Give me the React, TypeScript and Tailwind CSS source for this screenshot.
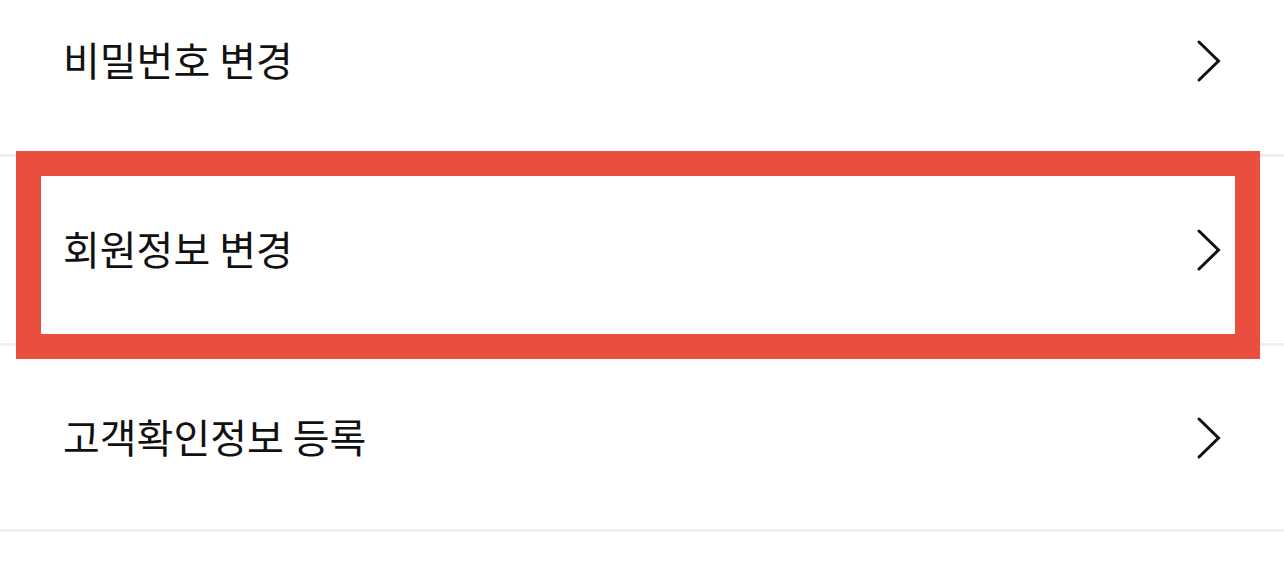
import { ReactNode } from "react";

const rows = [
  { label: "비밀번호 변경", height: "h-[186px]" },
  { label: "회원정보 변경", height: "h-[186px]", highlighted: true },
  { label: "고객확인정보 등록", height: "h-[183px]" },
];

export default function App() {
  return (
    <div className="h-[570px] w-[1284px] overflow-hidden bg-white">
      <ul className="-mt-[32px]">
        {rows.map((row) => (
          <MenuRow key={row.label} height={row.height} highlighted={row.highlighted}>
            {row.label}
          </MenuRow>
        ))}
      </ul>
    </div>
  );
}

function MenuRow({
  children,
  height,
  highlighted,
}: {
  children: ReactNode;
  height: string;
  highlighted?: boolean;
}) {
  return (
    <li className="relative border-b-[3px] border-[#efefef]">
      <div className={`flex ${height} items-center justify-between pl-[63px] pr-[62px]`}>
        <span className="pb-[4px] font-['Noto_Sans_CJK_KR',sans-serif] text-[40px] font-normal leading-none text-[#111]">
          {children}
        </span>
        <Chevron />
      </div>
      {highlighted ? (
        <div className="pointer-events-none absolute left-[16px] top-[-6px] h-[208px] w-[1244px] border-[25px] border-[#e94e3e]" />
      ) : null}
    </li>
  );
}

function Chevron() {
  return (
    <svg width="26" height="44" viewBox="0 0 26 44" fill="none" className="shrink-0">
      <path
        d="M3 3 L22.5 22 L3 41"
        stroke="#111"
        strokeWidth="3"
        strokeLinecap="round"
        strokeLinejoin="miter"
      />
    </svg>
  );
}
